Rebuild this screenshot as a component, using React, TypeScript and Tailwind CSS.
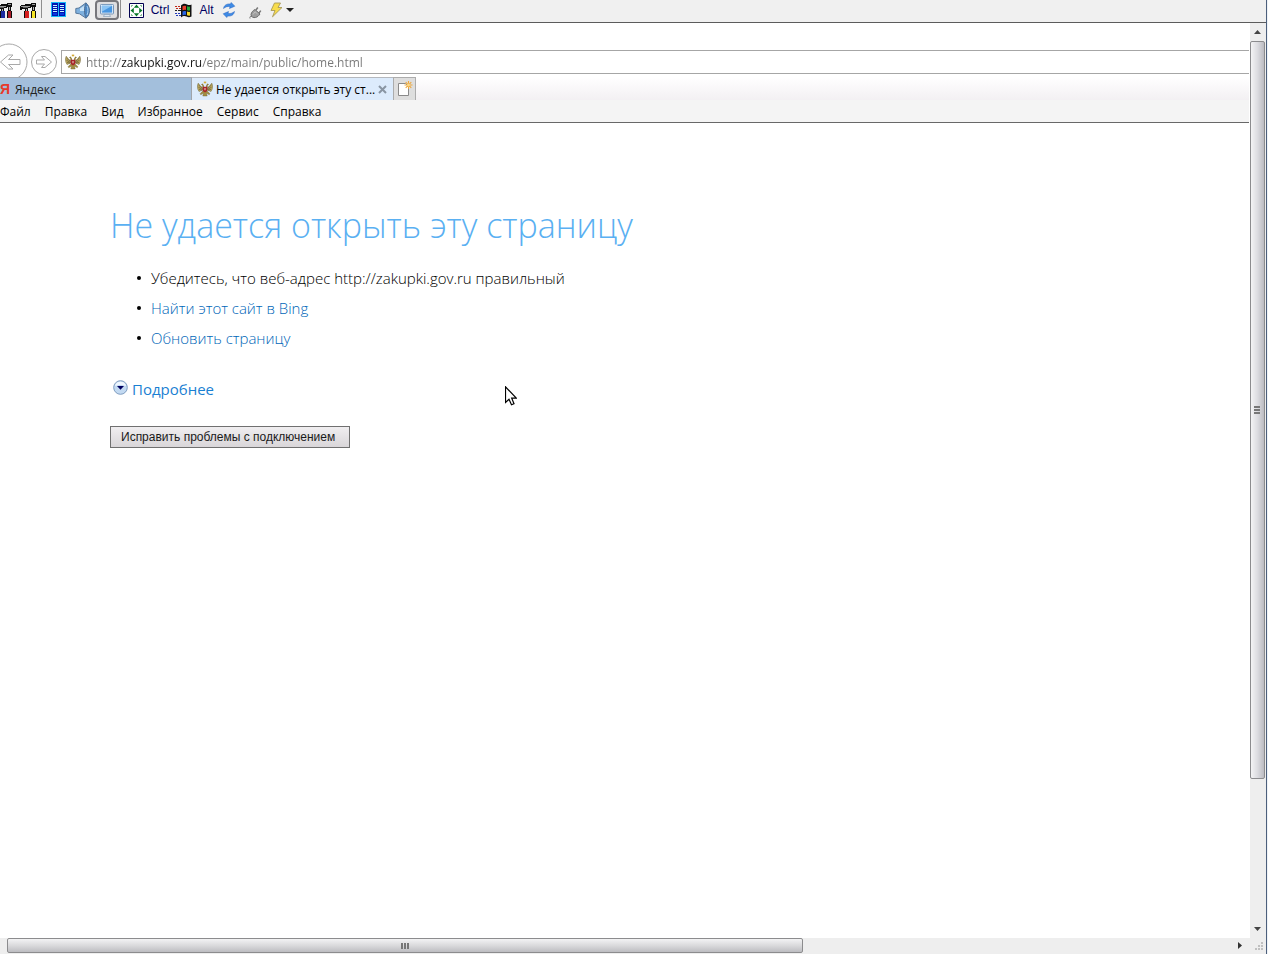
import React, { useState } from "react";

function HammerIcon({ left, right }: { left: string; right: string }) {
  return (
    <svg width="17" height="16" viewBox="0 0 17 16" aria-hidden="true" shapeRendering="crispEdges">
      <path d="M0 4h1v-1h4v-1h6v-1h5v4h-1v4h-3v-4h-1v1h-3v3h-3v-2h-3v1h-2z" fill="#0c0c0c" />
      <path d="M1 4h9v1h-9zM12 2h3v1h-3z" fill="#9c9c9c" />
      <path d="M3 5h5v1h-5z" fill="#5c5c5c" />
      <path d="M6 7h1v2h-1zM13 5h1v3h-1z" fill="#b4b4b4" />
      <path d="M4 9h5v7h-5zM11 9h5v7h-5z" fill="#0c0c0c" />
      <path d="M5 9h4v7h-4z" fill={left} />
      <path d="M12 9h3v7h-3z" fill={right} />
    </svg>
  );
}

function PanelsIcon() {
  return (
    <svg width="16" height="16" viewBox="0 0 16 16" aria-hidden="true" shapeRendering="crispEdges">
      <path d="M0 0h15v15h-15z" fill="#18b8f8" />
      <path d="M1 1h6v13h-6zM8 1h6v13h-6z" fill="#0014b0" />
      <path d="M2 3h4v1h-4zM2 5h4v1h-4zM2 7h4v1h-4zM2 9h4v1h-4zM9 3h4v1h-4zM9 5h4v1h-4zM9 7h4v1h-4zM9 9h4v1h-4z" fill="#c8f4ff" />
      <path d="M2 11h4v2h-4zM9 11h4v2h-4z" fill="#0a38e0" />
    </svg>
  );
}

function SpeakerIcon() {
  return (
    <svg width="16" height="17" viewBox="0 0 16 17" aria-hidden="true">
      <path d="M.8 6.500 4 6 11 .8v15.400L4.500 11.800.8 11.200z" fill="#7eb0de" stroke="#58789c" />
      <path d="M5 6.500 10.300 3v6L5 9z" fill="#c6e2f8" />
      <path d="M11 1c2 1.500 3.500 4.500 3.500 7.500S13 15 11 16c-1-2-1.500-4.500-1.500-7.500S10 2.500 11 1z" fill="#4c86c2" stroke="#526f92" />
      <path d="M12 4c1.300 2 1.300 6.500 0 9" stroke="#a8d0f2" fill="none" />
    </svg>
  );
}

function MonitorIcon() {
  return (
    <svg width="14" height="13" viewBox="0 0 16 15" aria-hidden="true">
      <rect x=".5" y=".5" width="15" height="11" rx="1" fill="#eef6fd" stroke="#6187b0" />
      <rect x="2" y="2" width="12" height="8" fill="#4796e2" />
      <path d="M2 2h12L2 9z" fill="#8bc4f4" />
      <path d="M5 12h6l1 2.500H4z" fill="#dce8f4" stroke="#7892ae" strokeWidth=".7" />
    </svg>
  );
}

function FullscreenIcon() {
  return (
    <svg width="15" height="15" viewBox="0 0 15 15" aria-hidden="true">
      <path d="M.5.500h14v14H.5z" fill="#fff" stroke="#000050" />
      <path d="M7.500 1.500 10.200 4.800H4.800zM7.500 13.500 10.200 10.200H4.800zM1.500 7.500 4.800 4.800v5.400zM13.500 7.500 10.200 4.800v5.400z" fill="#087828" />
      <path d="M2 2h2v1H3v1H2zM11 2h2v2h-1V3h-1zM2 11h1v1h1v1H2zM12 11h1v2h-2v-1h1z" fill="#8cc09a" shapeRendering="crispEdges" />
    </svg>
  );
}

function FlagIcon() {
  return (
    <svg width="17" height="15" viewBox="0 0 17 15" aria-hidden="true">
      <path d="M6 2.500C8 .5 10 .5 12 1.500s3 .5 4.500 0v12c-2 1-3.500.8-5 0s-3.500-.8-5.500 1z" fill="#111" />
      <path d="M7.500 3.300c1.200-.8 2.300-.8 3.500-.3v4c-1.200-.5-2.300-.4-3.500.3z" fill="#e8402c" />
      <path d="M12 3.300c1 .5 2 .6 3 .3v3.900c-1 .3-2 .1-3-.3z" fill="#22a83a" />
      <path d="M7.500 8.500c1.200-.7 2.300-.7 3.500-.3v3.800c-1.200-.4-2.300-.2-3.500.5z" fill="#2864e4" />
      <path d="M12 8.500c1 .5 2 .6 3 .3v3.700c-1 .4-2 .2-3-.3z" fill="#f4d828" />
      <path d="M0 3h2v1H0zM3 3h2v1H3zM1 5h2v1H1zM4 5h2v1H4z" fill="#c02818" />
      <path d="M0 7h2v1H0zM3 7h3v1H3z" fill="#222" />
      <path d="M0 10h2v1H0zM3 10h2v1H3zM1 12h2v1H1zM4 12h2v1H4z" fill="#2038b8" />
    </svg>
  );
}

function RefreshIcon() {
  return (
    <svg width="14" height="16" viewBox="0 0 14 16" aria-hidden="true">
      <path d="M1.500 6.500C2 3 5 1.500 8.500 2L9.200.5 12.800 4.200 7.500 6.500 8 4.600C5.500 4 3.500 5 1.500 6.500z" fill="#3e8be6" stroke="#2460bc" strokeWidth=".5" />
      <path d="M12.500 9.500C12 13 9 14.500 5.500 14L4.800 15.500 1.200 11.800 6.500 9.500 6 11.400C8.500 12 10.500 11 12.500 9.500z" fill="#3e8be6" stroke="#2460bc" strokeWidth=".5" />
    </svg>
  );
}

function PlugIcon() {
  return (
    <svg width="13" height="14" viewBox="0 0 13 14" aria-hidden="true">
      <path d="M1 13.500C.5 11.500 1.500 11 3 11.500" stroke="#777" fill="none" />
      <path d="M2 9.500C2.500 7 4 5.500 6 4.500L11 9C9.500 11 8.500 12 6.500 12.500 4.500 13 2 12 2 9.500z" fill="#9d9d9d" stroke="#6c6c6c" />
      <path d="M7 5 8.800 2.500M10 8 11.800 5.600" stroke="#777" strokeWidth="1.500" />
      <path d="M4 9.500 6 6.800l2.500 2" stroke="#c0c0c0" fill="none" />
    </svg>
  );
}

function BoltIcon() {
  return (
    <svg width="13" height="16" viewBox="0 0 13 16" aria-hidden="true">
      <path d="M4.500 1h6L8 5.500h4L2.500 14.800 5 8.500H1z" fill="#f7dc4c" stroke="#a99a58" strokeWidth=".9" />
    </svg>
  );
}

function EagleIcon() {
  return (
    <svg width="16" height="16" viewBox="0 0 16 16" className="shrink-0" aria-hidden="true">
      <path d="M5.500 6.500C3.500 5.500 2.500 3.500 1.200 2.200 0 4.500.2 8 2 10.500L5.500 9zM10.500 6.500c2-1 3-3 4.300-4.300C16 4.500 15.800 8 14 10.500L10.500 9z" fill="#c0ac62" stroke="#6d6234" strokeWidth=".5" />
      <path d="M1.500 4 5.500 7.500M1.400 6.200 5.400 8.500M2 8.500l3.400.6M14.500 4l-4 3.500M14.600 6.200l-4 2.300M14 8.500l-3.400.6" stroke="#544c28" strokeWidth=".6" />
      <path d="M7 6.500 6.800 4.200 5.500 2.500 4 3.600 5.300 4.200 5.500 6.500zM9 6.500l.2-2.300L10.500 2.500 12 3.600l-1.300.6-.2 2.300z" fill="#8d7a36" />
      <path d="M6.800.6h2.400v1.700H6.800z" fill="#d4aa32" />
      <path d="M5.800 10 3 12.800l.8.900L6.500 12l-.7 3h4.400l-.7-3 2.700 1.700.8-.9L10.200 10z" fill="#a48d40" stroke="#6d6234" strokeWidth=".4" />
      <path d="M5.700 5.800h4.600v4L8 11.600 5.700 9.800z" fill="#a8242a" />
      <path d="M7.500 7h1v2.200h-1z" fill="#ecd6c8" />
    </svg>
  );
}

function NewTabIcon() {
  return (
    <svg width="16" height="16" viewBox="0 0 16 16" aria-hidden="true">
      <path d="M1.500 2.500h7l3 3v9h-10z" fill="#fff" stroke="#8a8a8a" />
      <path d="M11.500 0v8M7.500 4h8M8.700 1.200l5.600 5.600M14.300 1.200 8.700 6.800" stroke="#eda73c" strokeWidth="1.100" />
      <circle cx="11.500" cy="4" r="1.500" fill="#fbd887" />
    </svg>
  );
}

function Separator() {
  return <div className="ml-px h-[18px] w-px shrink-0 bg-[#8f8f8f]" />;
}

const toolButton = "flex h-5 shrink-0 items-center justify-center text-xs text-[#000060]";

function Toolbar() {
  return (
    <div className="flex h-[23px] items-start overflow-hidden border-b border-[#5c5c5c] bg-[#f0f0f0] font-['Liberation_Sans',sans-serif]">
      <button aria-label="Настройка" className="flex h-5 w-4 shrink-0 items-center justify-end overflow-hidden pr-[3px]">
        <span className="shrink-0"><HammerIcon left="#1c2ca0" right="#a81c28" /></span>
      </button>
      <button aria-label="Параметры" className={toolButton + " w-6"}><HammerIcon left="#d42020" right="#f4e428" /></button>
      <Separator />
      <button aria-label="Панели" className={toolButton + " ml-[5px] w-6"}><PanelsIcon /></button>
      <button aria-label="Звук" className={toolButton + " w-6"}><SpeakerIcon /></button>
      <button aria-label="Экран" className="flex h-5 w-6 shrink-0 items-center justify-center rounded-sm border-2 border-[#77777c] bg-[#dedee0]"><MonitorIcon /></button>
      <Separator />
      <button aria-label="Во весь экран" className={toolButton + " ml-[3px] w-6"}><FullscreenIcon /></button>
      <button className={toolButton + " w-6"}>Ctrl</button>
      <button aria-label="Пуск" className={toolButton + " w-[23px]"}><FlagIcon /></button>
      <button className={toolButton + " w-[23px]"}>Alt</button>
      <button aria-label="Обновить" className={toolButton + " w-[22px]"}><RefreshIcon /></button>
      <button aria-label="Отключить" className={toolButton + " ml-[3px] w-6 pt-1"}><PlugIcon /></button>
      <button aria-label="Действия" className="ml-[3px] flex h-5 w-7 shrink-0 items-center gap-[3px]">
        <BoltIcon />
        <svg width="8" height="4" viewBox="0 0 8 4" aria-hidden="true"><path d="M0 0h8L4 4z" fill="#222" /></svg>
      </button>
    </div>
  );
}

function AddressRow() {
  const [url, setUrl] = useState("http://zakupki.gov.ru/epz/main/public/home.html");
  return (
    <div className="flex h-[54px] items-center pt-[23px]">
      <button aria-label="Назад" className="shrink-0">
        <svg width="28" height="38" viewBox="0 0 28 38" aria-hidden="true">
          <circle cx="9" cy="19" r="18" fill="#fff" stroke="#a9a9a9" />
          <path d="M20 16.500H8.500l4.500-4.500H8.500L.5 19l8 7h4.500l-4.500-4.500H20z" fill="#fff" stroke="#a9a9a9" />
        </svg>
      </button>
      <button aria-label="Вперед" className="ml-0.5 shrink-0">
        <svg width="28" height="28" viewBox="0 0 28 28" aria-hidden="true">
          <circle cx="14" cy="14" r="12.500" fill="#fff" stroke="#a9a9a9" />
          <path d="M6.500 12h8l-3-3.500H15l6.500 5.500L15 19.500h-3.500l3-3.500h-8z" fill="#fff" stroke="#a9a9a9" />
        </svg>
      </button>
      <div className="ml-[3px] flex h-6 min-w-0 flex-1 items-center gap-[5px] border border-r-0 border-[#a6a6a6] bg-white pl-[3px]">
        <EagleIcon />
        <input
          aria-label="Адрес"
          value={url}
          onChange={(e) => setUrl(e.target.value)}
          className="min-w-0 flex-1 bg-[linear-gradient(90deg,#777_35px,#111_35px,#111_115px,#777_115px)] bg-clip-text pt-0.5 text-xs text-transparent outline-none"
        />
      </div>
    </div>
  );
}

function TabRow() {
  return (
    <div className="flex h-[23px] bg-linear-to-b from-white to-[#f3f0f3]">
      <button className="flex w-48 items-center gap-[7px] border-t border-r border-[#a0a4aa] bg-[#a3bfdc] text-left text-xs text-[#222]">
        <span aria-hidden="true" className="w-2 shrink-0 font-['Liberation_Sans_Narrow','Liberation_Sans',sans-serif] text-sm leading-5 font-bold text-[#e8392a]">Я</span>
        <span className="pt-0.5">Яндекс</span>
      </button>
      <div className="flex w-[201px] items-center border-t border-[#b4b8be] bg-[#dcebfc] pl-[5px]">
        <button className="flex min-w-0 flex-1 items-center gap-[3px] text-xs whitespace-nowrap text-black">
          <EagleIcon />
          <span className="pt-0.5">Не удается открыть эту ст...</span>
        </button>
        <button aria-label="Закрыть вкладку" className="flex w-[18px] justify-start pl-[3px]">
          <svg width="9" height="9" viewBox="0 0 9 9" aria-hidden="true"><path d="m1 1 7 7M8 1 1 8" stroke="#8995a3" strokeWidth="2" /></svg>
        </button>
      </div>
      <button aria-label="Новая вкладка" className="flex w-[23px] items-center justify-center border border-b-0 border-[#acacac] bg-[#dedede]">
        <NewTabIcon />
      </button>
    </div>
  );
}

const menuItems = ["Файл", "Правка", "Вид", "Избранное", "Сервис", "Справка"];

function MenuRow() {
  return (
    <div className="flex h-[23px] items-center gap-[14px] border-b border-[#686868] bg-[#f4f4f4] pt-0.5 text-xs text-black">
      {menuItems.map((item) => (
        <button key={item}>{item}</button>
      ))}
    </div>
  );
}

function ErrorPage() {
  return (
    <main className="relative flex-1 pt-[79px] pl-[110px]">
      <h1 className="text-[34px] leading-[46px] font-light text-[#5ab0f2]">Не удается открыть эту страницу</h1>
      <ul className="mt-5 flex flex-col gap-[10px] pl-[41px] text-[15px] leading-5 font-light text-black">
        <ListItem>Убедитесь, что веб-адрес http://zakupki.gov.ru правильный</ListItem>
        <ListItem><a href="#bing" className="text-[#0066b8]">Найти этот сайт в Bing</a></ListItem>
        <ListItem><a href="#refresh" className="text-[#0066b8]">Обновить страницу</a></ListItem>
      </ul>
      <button className="mt-[29px] ml-[3px] flex items-center gap-1 text-[15px] leading-6 text-[#1a80d2]">
        <svg width="15" height="15" viewBox="0 0 15 15" className="mb-1" aria-hidden="true">
          <circle cx="7.500" cy="7.500" r="6.800" fill="#c3daf2" stroke="#7f9dc0" />
          <path d="M2 6a5.700 5.700 0 0 1 11 0c-3-1.500-8-1.500-11 0z" fill="#f0f7fe" />
          <path d="M4 6h7l-3.500 3.800z" fill="#000060" />
        </svg>
        Подробнее
      </button>
      <button className="mt-[25px] flex h-[22px] items-center border border-[#707070] bg-linear-to-b from-[#f0eef0] to-[#d9d6d9] pr-[14px] pl-[10px] font-['Liberation_Sans',sans-serif] text-xs text-[#1a1a1a]">
        Исправить проблемы с подключением
      </button>
      <svg width="12" height="20" viewBox="0 0 12 20" className="absolute top-[263px] left-[505px]" aria-hidden="true">
        <path d="M.5.800v15.700l3.500-3.300 2.500 5.500 2.500-1-2.300-5.500h4.600z" fill="#fff" stroke="#000" strokeWidth="1.200" />
      </svg>
    </main>
  );
}

function ListItem({ children }: { children: React.ReactNode }) {
  return (
    <li className="relative">
      <span className="absolute top-2 -left-[14px] size-1 rounded-full bg-black" />
      {children}
    </li>
  );
}

function VerticalScrollbar() {
  return (
    <div className="flex w-4 shrink-0 flex-col bg-[#eeeeee] pr-px">
      <button aria-label="Вверх" className="flex h-[18px] items-center justify-center">
        <svg width="7" height="4" viewBox="0 0 7 4" aria-hidden="true"><path d="M0 4h7L3.500 0z" fill="#444" /></svg>
      </button>
      <div className="flex-1">
        <div className="flex h-[84%] items-center justify-center rounded-xs border border-[#8c8c8e] bg-linear-to-r from-[#f4f4f5] via-[#dcdce0] to-[#bcbcc2]">
          <svg width="7" height="8" viewBox="0 0 7 8" aria-hidden="true" shapeRendering="crispEdges"><path d="M0 0h6v2H0zM0 3h6v2H0zM0 6h6v2H0z" fill="#777" /></svg>
        </div>
      </div>
      <button aria-label="Вниз" className="flex h-[18px] items-center justify-center">
        <svg width="7" height="4" viewBox="0 0 7 4" aria-hidden="true"><path d="M0 0h7L3.500 4z" fill="#444" /></svg>
      </button>
    </div>
  );
}

function HorizontalScrollbar() {
  return (
    <div className="flex h-4 bg-[#eeeeee] pb-px">
      <div className="flex min-w-0 flex-1 pl-[7px]">
        <div className="flex w-[65%] items-center justify-center rounded-xs border border-[#8c8c8e] bg-linear-to-b from-[#f3f3f4] via-[#dadadc] to-[#bdbdc1]">
          <svg width="8" height="6" viewBox="0 0 8 6" aria-hidden="true" shapeRendering="crispEdges"><path d="M0 0h2v6H0zM3 0h2v6H3zM6 0h2v6H6z" fill="#777" /></svg>
        </div>
      </div>
      <button aria-label="Вправо" className="flex w-[18px] items-center justify-center">
        <svg width="4" height="7" viewBox="0 0 4 7" aria-hidden="true"><path d="M0 0v7l4-3.500z" fill="#333" /></svg>
      </button>
      <div className="flex w-[17px] items-end justify-end p-0.5">
        <svg width="9" height="9" viewBox="0 0 9 9" aria-hidden="true" shapeRendering="crispEdges"><path d="M6 0h2v2H6zM3 3h2v2H3zM6 3h2v2H6zM0 6h2v2H0zM3 6h2v2H3zM6 6h2v2H6z" fill="#c0c0c0" /></svg>
      </div>
    </div>
  );
}

export default function App() {
  return (
    <div className="flex min-h-screen bg-[#eef2f6] pr-px font-['Open_Sans','Noto_Sans',sans-serif]">
      <div className="flex min-w-0 flex-1 flex-col border-r border-[#4c5f7c] bg-white">
        <Toolbar />
        <div className="flex flex-1">
          <div className="mr-px flex min-w-0 flex-1 flex-col bg-white">
            <AddressRow />
            <TabRow />
            <MenuRow />
            <ErrorPage />
          </div>
          <VerticalScrollbar />
        </div>
        <HorizontalScrollbar />
      </div>
    </div>
  );
}
